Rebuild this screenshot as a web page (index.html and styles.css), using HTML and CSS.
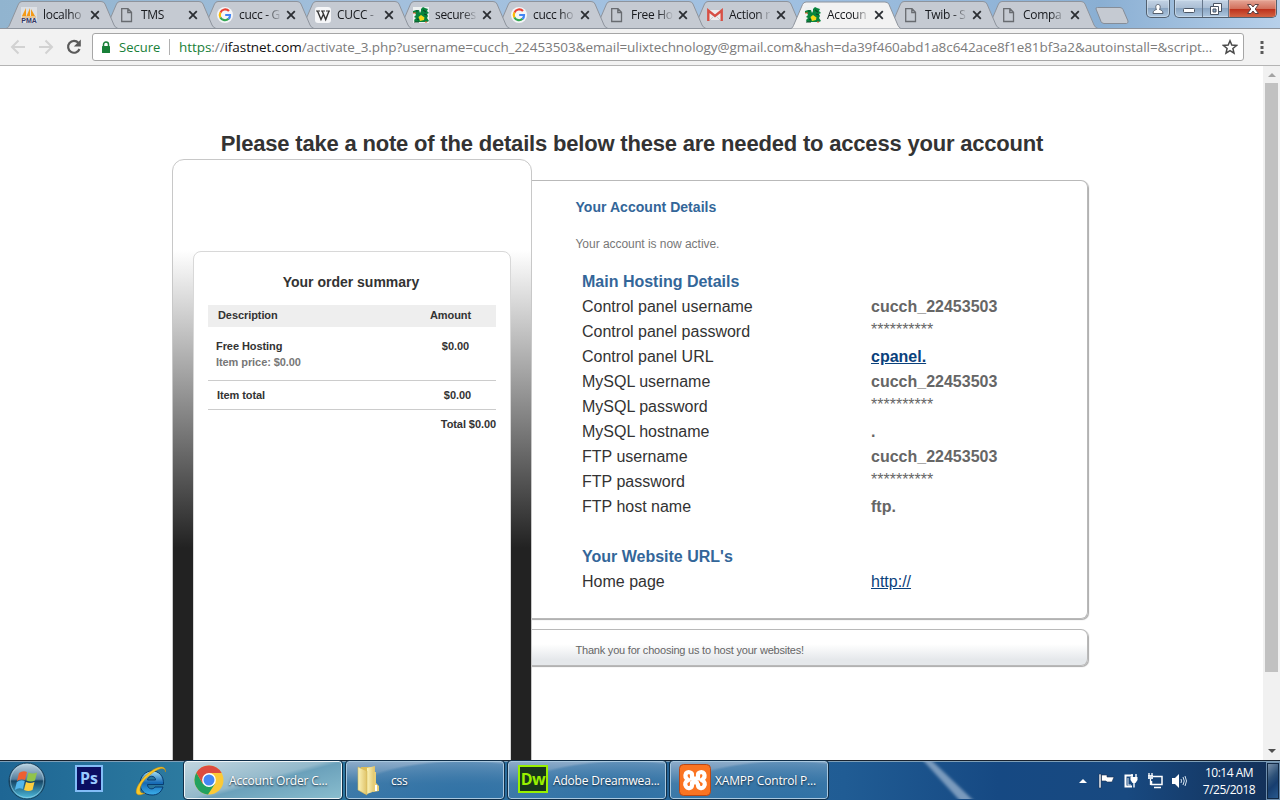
FILE: index.html
```html
<!DOCTYPE html>
<html lang="en">
<head>
<meta charset="utf-8">
<title>Account Order Confirmation</title>
<link rel="stylesheet" href="styles.css">
</head>
<body>
<svg class="defs" width="0" height="0" aria-hidden="true">
  <defs>
    <linearGradient id="orb" x1="0" y1="0" x2="0" y2="1"><stop offset="0" stop-color="#c0d5e2"/><stop offset=".45" stop-color="#557f9e"/><stop offset=".5" stop-color="#164464"/><stop offset="1" stop-color="#4fc0e2"/></linearGradient>
    <linearGradient id="ie" x1="0" y1="0" x2="0" y2="1"><stop offset="0" stop-color="#a5e2f8"/><stop offset=".5" stop-color="#1669b4"/><stop offset="1" stop-color="#3cb0ec"/></linearGradient>
    <linearGradient id="fold" x1="0" y1="0" x2="1" y2="0"><stop offset="0" stop-color="#fbf3b8"/><stop offset="1" stop-color="#dfc267"/></linearGradient>
    <filter id="soft" x="-20%" y="-20%" width="140%" height="140%"><feGaussianBlur stdDeviation="1.500"/></filter>
    <symbol id="tab" viewBox="0 0 112 28"><path d="M0 28.5 C2 28 2.500 27 3.500 25 L12.500 4 Q13.700 1.500 16 1.500 H95 Q98 1.500 99 4 L108 25 Q109.500 28 112 28.500Z" fill="currentColor" stroke="#8e949d"/></symbol>
    <symbol id="x" viewBox="0 0 10 10"><path d="M1.200 1.200l7.600 7.600M8.800 1.200l-7.600 7.600" stroke="#2b2e33" stroke-width="1.800"/></symbol>
    <symbol id="doc" viewBox="0 0 16 16"><path d="M2.700 1.700H9L12.500 5.300V14.500H2.700ZM8.800 1.700V5.500H12.500" fill="none" stroke="#686b70" stroke-width="1.300"/></symbol>
    <symbol id="google" viewBox="0 0 16 16"><circle cx="8" cy="8" r="8" fill="#f5f6f8"/><path d="M12 4.100A5.200 5.200 0 0 0 3.400 5.600" fill="none" stroke="#ea4335" stroke-width="2.200"/><path d="M3.400 5.600a5.200 5.200 0 0 0 0 4.900" fill="none" stroke="#fbbc05" stroke-width="2.200"/><path d="M3.400 10.500a5.200 5.200 0 0 0 8.200 1.300" fill="none" stroke="#34a853" stroke-width="2.200"/><path d="M8.200 8H13a5 5 0 0 1-1.500 3.900" fill="none" stroke="#4285f4" stroke-width="2.200"/></symbol>
    <symbol id="wiki" viewBox="0 0 16 16"><rect width="16" height="16" rx="3" fill="#f5f6f8"/><path d="M1 4h4M6 4h4M11 4h4" stroke="#333" stroke-width="1"/><path d="M2.500 4l3.500 8.500 2.300-5M7.200 4l3.500 8.500L14 4" fill="none" stroke="#333" stroke-width="1.400"/></symbol>
    <symbol id="dragon" viewBox="0 0 16 16"><rect width="16" height="16" fill="#eef1f1"/><path d="M0 4L3 3l3 0 1 3 1-2 0-2 2-2 2 1 3 1-1 2 2 2-2 1 1 2-1 2 2 3-2 1H2l-1-2 2-2-2-1 2-2-1-2-2 0Z" fill="#08843d"/><path d="M5.500 10l2.500-2 3.500 2.500L11 13 7 14Z" fill="#f4d817"/><path d="M3 4h2M10 3l3 2M4 12l2 1M11 7l3 1M1 15h5" stroke="#0a4926" stroke-width="1.200"/><path d="M0 6h3M12 15h2" stroke="#e45d27"/></symbol>
    <symbol id="gmail" viewBox="0 0 16 16"><path d="M1 3h14v10H1Z" fill="#eee"/><path d="M1.300 14V3.500L8 9l6.700-5.500V14" fill="none" stroke="#d75045" stroke-width="2.400"/><path d="M3 13l4-4M13 13L9 9" stroke="#ccc"/></symbol>
  </defs>
</svg>

<header class="chrome">
  <div class="tabstrip">
    <div class="tabs">
      <div class="tab"><svg class="shape"><use href="#tab"/></svg><svg class="fav" viewBox="0 0 16 16"><rect width="16" height="16" fill="#dde0e5"/><path d="M1 9L5 1v8ZM5.500 9L9 1v8ZM10 9V2l4 7Z" fill="#f49a16"/><path d="M1 10h14" stroke="#f3ac46"/><text class="pma" x="0.3" y="15.800">PMA</text></svg><span class="name">localho</span><svg class="close"><use href="#x"/></svg></div>
      <div class="tab"><svg class="shape"><use href="#tab"/></svg><svg class="fav"><use href="#doc"/></svg><span class="name">TMS</span><svg class="close"><use href="#x"/></svg></div>
      <div class="tab"><svg class="shape"><use href="#tab"/></svg><svg class="fav"><use href="#google"/></svg><span class="name">cucc - G</span><svg class="close"><use href="#x"/></svg></div>
      <div class="tab"><svg class="shape"><use href="#tab"/></svg><svg class="fav"><use href="#wiki"/></svg><span class="name">CUCC -</span><svg class="close"><use href="#x"/></svg></div>
      <div class="tab"><svg class="shape"><use href="#tab"/></svg><svg class="fav"><use href="#dragon"/></svg><span class="name">secures</span><svg class="close"><use href="#x"/></svg></div>
      <div class="tab"><svg class="shape"><use href="#tab"/></svg><svg class="fav"><use href="#google"/></svg><span class="name">cucc ho</span><svg class="close"><use href="#x"/></svg></div>
      <div class="tab"><svg class="shape"><use href="#tab"/></svg><svg class="fav"><use href="#doc"/></svg><span class="name">Free Ho</span><svg class="close"><use href="#x"/></svg></div>
      <div class="tab"><svg class="shape"><use href="#tab"/></svg><svg class="fav"><use href="#gmail"/></svg><span class="name">Action r</span><svg class="close"><use href="#x"/></svg></div>
      <div class="tab active"><svg class="shape"><use href="#tab"/></svg><svg class="fav"><use href="#dragon"/></svg><span class="name">Accoun</span><svg class="close"><use href="#x"/></svg></div>
      <div class="tab"><svg class="shape"><use href="#tab"/></svg><svg class="fav"><use href="#doc"/></svg><span class="name">Twib - S</span><svg class="close"><use href="#x"/></svg></div>
      <div class="tab"><svg class="shape"><use href="#tab"/></svg><svg class="fav"><use href="#doc"/></svg><span class="name">Compa</span><svg class="close"><use href="#x"/></svg></div>
    </div>
    <svg class="newtab" width="34" height="17" viewBox="0 0 34 17"><path d="M1 2Q.5.500 2.500.500H25Q27 .5 28 2.500L33 14Q33.500 16 31.500 16.500H9Q7 16.500 6 14.500Z" fill="#c5cad2" stroke="#858d98"/></svg>
    <div class="winbtns">
      <div class="wb user"><svg width="12" height="12" viewBox="0 0 12 12"><path d="M1 10.500C1 7.500 3 7 4.500 6.500 3 3.500 4 1.500 6 1.500s3 2 1.500 5c1.500.5 3.500 1 3.500 4Z" fill="#fff" stroke="#56606e"/></svg></div>
      <div class="wbgroup">
        <div class="wb min"><svg width="14" height="12" viewBox="0 0 14 12"><rect x="1.500" y="5.500" width="11" height="4" rx="1" fill="#fff" stroke="#4b5564"/></svg></div>
        <div class="wb max"><svg width="14" height="14" viewBox="0 0 14 14"><path d="M4.500 1.500h8v8h-8z" fill="#fff" stroke="#4b5564"/><path d="M1.500 4.500h8v8h-8z" fill="#fff" stroke="#4b5564"/><path d="M4 7h3v3H4z" fill="#8caac9" stroke="#4b5564"/></svg></div>
        <div class="wb exit"><svg width="14" height="12" viewBox="0 0 14 12"><path d="M1.500 1.500h3.500l2 2.500 2-2.500h3.500L9.200 6l3.300 4.500H9L7 8l-2 2.500H1.500L4.800 6Z" fill="#fff" stroke="#5a4043"/></svg></div>
      </div>
    </div>
  </div>
  <div class="toolbar">
    <svg class="nav" width="82" height="24" viewBox="0 0 82 24"><path d="M15 12H2M8.500 5.500L2 12l6.500 6.500M29 12h13M35.500 5.500L42 12l-6.500 6.500" fill="none" stroke="#d2d2d2" stroke-width="2"/><path d="M68.500 8A5.900 5.900 0 1 0 69.500 14" fill="none" stroke="#5a5a5a" stroke-width="2.200"/><path d="M70.800 4.500v7h-7Z" fill="#5a5a5a"/></svg>
    <div class="omnibox">
      <svg class="lock" width="10" height="13" viewBox="0 0 10 13"><path d="M2.500 6V3.500a2.500 2.500 0 0 1 5 0V6" fill="none" stroke="#188038" stroke-width="1.500"/><rect x="1" y="5" width="8" height="7" rx=".6" fill="#188038"/></svg>
      <span class="secure">Secure</span><i class="sep"></i>
      <span class="url"><b class="https">https</b>://<b class="host">ifastnet.com</b>/activate_3.php?username=cucch_22453503&amp;email=ulixtechnology@gmail.com&amp;hash=da39f460abd1a8c642ace8f1e81bf3a2&amp;autoinstall=&amp;script...</span>
      <svg class="star" width="16" height="16" viewBox="0 0 16 16"><path d="M8 1.800l1.800 4.300 4.700.4-3.600 3 1.100 4.600L8 11.700l-4 2.400 1.100-4.600-3.600-3 4.700-.4Z" fill="none" stroke="#4a4a4a" stroke-width="1.500"/></svg>
    </div>
    <svg class="dots" width="4" height="14" viewBox="0 0 4 14"><path d="M.5 1h3v3h-3zM.5 6h3v3h-3zM.5 11h3v3h-3z" fill="#5a5a5a"/></svg>
  </div>
</header>

<div class="viewport">
  <main class="page">
    <h1>Please take a note of the details below these are needed to access your account</h1>
    <div class="columns">
      <aside class="tower">
        <section class="summary">
          <h2>Your order summary</h2>
          <div class="line head"><span>Description</span><span>Amount</span></div>
          <div class="line item"><span>Free Hosting<br><em>Item price: $0.00</em></span><span>$0.00</span></div>
          <div class="line total"><span>Item total</span><span>$0.00</span></div>
          <p class="grand">Total $0.00</p>
        </section>
      </aside>
      <div class="right">
        <section class="box details">
          <h3>Your Account Details</h3>
          <p class="status">Your account is now active.</p>
          <dl class="grid">
            <dt class="group">Main Hosting Details</dt><dd></dd>
            <dt>Control panel username</dt><dd>cucch_22453503</dd>
            <dt>Control panel password</dt><dd class="mask">**********</dd>
            <dt>Control panel URL</dt><dd><a>cpanel.</a></dd>
            <dt>MySQL username</dt><dd>cucch_22453503</dd>
            <dt>MySQL password</dt><dd class="mask">**********</dd>
            <dt>MySQL hostname</dt><dd>.</dd>
            <dt>FTP username</dt><dd>cucch_22453503</dd>
            <dt>FTP password</dt><dd class="mask">**********</dd>
            <dt>FTP host name</dt><dd>ftp.</dd>
            <dt></dt><dd></dd>
            <dt class="group">Your Website URL's</dt><dd></dd>
            <dt>Home page</dt><dd class="plain"><a>http://</a></dd>
          </dl>
        </section>
        <section class="box thanks">Thank you for choosing us to host your websites!</section>
      </div>
    </div>
  </main>
  <div class="scroll"><i class="up"></i><i class="thumb"></i><i class="down"></i></div>
</div>

<footer class="taskbar">
  <div class="launch">
    <svg class="orb" width="38" height="38" viewBox="0 0 38 38"><circle cx="19" cy="19" r="18" fill="url(#orb)" stroke="#163d58"/><circle cx="19" cy="19" r="16.500" fill="none" stroke="#b5dced" stroke-opacity=".5"/><path d="M11 11q4-3 8-1l-2 8q-4-2-8 1Z" fill="#ee6031"/><path d="M20.500 10.500q4 2 8.500 0l-2 8q-4 2-8.500 0Z" fill="#91c44b"/><path d="M8.800 20q4-3 8-1l-2 8q-4-2-8 1Z" fill="#53b6ec"/><path d="M18 20q4 2 8.500 0l-2 8q-4 2-8.500 0Z" fill="#fccd3e"/></svg>
    <span class="ps">Ps</span>
    <svg class="ie" width="34" height="34" viewBox="0 0 34 34"><path d="M29.500 20.500H13.500c0 5 6 5.500 7.500 2.500h8C27 29 23 31 18 31 10 31 6 26 6 19.500S11 7 18 7s12 5 11.500 13.500ZM13.500 16h8c0-5-7.500-5-8 0Z" fill="url(#ie)" fill-rule="evenodd" stroke="#083d71"/><path d="M31.500 8C32 1 24 2 16 8 6 15 0 27 3 30c2 2 6 0 8-1-9 2-5-11 5-18C24 4 31 2 31.500 8Z" fill="#f9c828" stroke="#c88a0a" stroke-width=".5"/></svg>
  </div>
  <div class="apps">
    <div class="app on"><svg width="32" height="32" viewBox="0 0 32 32"><circle cx="16" cy="16" r="14.500" fill="#fbc936"/><path d="M3.400 8.800A14.500 14.500 0 0 0 15 30.500L22.200 19.600 16 16 9.700 19.600Z" fill="#22a15f"/><path d="M3.400 8.800L9.700 19.600 16 9H28.600A14.500 14.500 0 0 0 3.400 8.800" fill="#dd4b3e"/><circle cx="16" cy="16" r="6.900" fill="#fff"/><circle cx="16" cy="16" r="5.500" fill="#4587f3"/></svg><span>Account Order C...</span></div>
    <div class="app folder"><svg width="32" height="32" viewBox="0 0 32 32"><path d="M6 3h11v25l-8 2Z" fill="#dcbd58"/><path d="M12 4l8-2v25l-8 3Z" fill="url(#fold)"/><path d="M3 3l9 4v24l-9-5Z" fill="url(#fold)" stroke="#d5b856" stroke-width=".6"/><path d="M19 8h2v11l3 3v5l-6 1Z" fill="#e8ce77"/><path d="M21 21v6" stroke="#fff" stroke-width="2"/></svg><span>css</span></div>
    <div class="app"><b class="dw">Dw</b><span>Adobe Dreamwea...</span></div>
    <div class="app"><svg class="xampp" width="32" height="32" viewBox="0 0 32 32"><rect x=".5" y=".5" width="31" height="31" rx="4" fill="#fa7422" stroke="#ba4715"/><path d="M7 9.500C8 7.500 13.500 7.500 13 11.500V14.500H19V11.500C18.500 7.500 24 7.500 25 9.500 26.500 12.500 25 14.500 22.500 16 26 17.500 26.500 20 25 22.500 23.500 25 18.500 24.500 19 20.500M7 9.500C5.500 12.500 7 14.500 9.500 16 6 17.500 5.500 20 7 22.500 8.500 25 13.500 24.500 13 20.500V18.500H18" fill="none" stroke="#fff" stroke-width="4.200" stroke-linejoin="round" stroke-linecap="round"/></svg><span>XAMPP Control P...</span></div>
  </div>
  <svg class="glow" width="70" height="38" viewBox="0 0 70 38"><path d="M10 -4h8l48 46H52Z" fill="#9bb4cf" fill-opacity=".75" filter="url(#soft)"/></svg>
  <div class="tray">
    <svg width="110" height="18" viewBox="0 0 110 18"><path d="M0 11l4-4 4 4Z" fill="#fff"/><g stroke="#172d4e" stroke-width=".6" fill="#fff"><path d="M20 2h2v14h-2zM22.500 3H28v2h7l-2 5h-5l-1-1h-4.500Z"/></g><path d="M54 3.500h-7.500v11H53" fill="none" stroke="#fff" stroke-width="2"/><path d="M49 6v7h3" fill="none" stroke="#dce5ef"/><path d="M51.500 5h7v3l-2 3h-3l-2-3Z" fill="#fff"/><path d="M53 2v3M57 2v3M55 10v5.500" stroke="#fff" stroke-width="1.400"/><path d="M73 4.500h10v8H72.500V9M75 15.500h7" fill="none" stroke="#fff" stroke-width="1.500"/><path d="M69 3h5v4h-5Z" fill="#dce5ef"/><path d="M70 1v3M73 1v3M71.500 7v6" stroke="#fff" stroke-width="1.300"/><path d="M93 6h3l4-4v14l-4-4h-3Z" fill="#fff"/><path d="M102 7q1 2 0 4M104 5q2.500 4 0 8M106 4q3 5 0 10" fill="none" stroke="#d6e3ef"/></svg>
    <div class="clock">10:14 AM<br>7/25/2018</div>
    <i class="peek"></i>
  </div>
</footer>
</body>
</html>
```

FILE: styles.css
```css
* { box-sizing: border-box; }
body { margin: 0; width: 1280px; height: 800px; overflow: hidden; display: flex; flex-direction: column; background: #fff; font-family: "Liberation Sans", Arial, sans-serif; }
svg { display: block; flex: none; }
.defs { position: absolute; }
h1, h2, h3, p, dl, dd { margin: 0; }

/* browser chrome */
.chrome { flex: none; height: 66px; font-family: "Open Sans", sans-serif; }
.tabstrip { height: 29px; display: flex; padding-left: 6px; background: linear-gradient(90deg, #91b4cf, #a3c0dd 30%, #a1c1e2 60%, #8aafd3 86%, #b7d0ea); border-bottom: 1px solid #8e949d; }
.tabs { display: flex; height: 29px; position: relative; }
.tab { position: relative; width: 98px; height: 29px; display: flex; align-items: center; padding: 0 4px 0 15px; color: #c5cad2; }
.shape { position: absolute; left: 0; top: 0; width: 112px; height: 28px; overflow: visible; }
.tab:nth-child(1) { z-index: 8; }
.tab:nth-child(2) { z-index: 7; }
.tab:nth-child(3) { z-index: 6; }
.tab:nth-child(4) { z-index: 5; }
.tab:nth-child(5) { z-index: 4; }
.tab:nth-child(6) { z-index: 3; }
.tab:nth-child(7) { z-index: 2; }
.tab:nth-child(8) { z-index: 1; }
.tab:nth-child(10) { z-index: 1; }
.tab.active { z-index: 20; color: #f2f2f2; height: 30px; padding-bottom: 1px; }
.tab.active .shape { height: 29px; }
.fav { position: relative; width: 16px; height: 16px; }
.name { position: relative; width: 42px; margin-left: 6px; font-size: 12px; line-height: 18px; letter-spacing: -.3px; white-space: nowrap; color: #17191d; -webkit-mask-image: linear-gradient(90deg, #000 65%, transparent 102%); mask-image: linear-gradient(90deg, #000 65%, transparent 102%); }
.close { position: relative; width: 10px; height: 10px; margin-left: 5px; }
.pma { font: bold 7px "Liberation Sans", sans-serif; fill: #343764; }
.newtab { margin: 7px 0 0 11px; }
.winbtns { display: flex; margin-left: auto; padding-right: 3px; gap: 4px; height: 18px; }
.wb { display: flex; align-items: center; justify-content: center; height: 18px; }
.user, .wbgroup { border: 1px solid #52606f; border-top: 0; border-radius: 0 0 5px 5px; box-shadow: inset 0 0 0 1px #d4e2f0aa; background: linear-gradient(#c3d3e5, #a9bdd3 48%, #8ba6c3 50%, #adc6df); }
.user { width: 24px; }
.wbgroup { display: flex; width: 103px; overflow: hidden; }
.min { width: 28px; border-right: 1px solid #66778b; }
.max { width: 26px; border-right: 1px solid #66778b; }
.exit { flex: 1; background: linear-gradient(#e5a596, #d2705c 48%, #bc301b 50%, #d56a48); box-shadow: inset 0 0 0 1px #f0b9a988; }
.toolbar { height: 37px; display: flex; align-items: center; background: #f2f2f2; border-bottom: 1px solid #b4b4b4; padding: 0 16px 0 10px; }
.omnibox { display: flex; align-items: center; width: 1152px; height: 28px; border: 1px solid #a6a6a6; border-radius: 3px; background: #fff; padding: 0 5px 0 8px; font-size: 14px; }
.secure { margin-left: 8px; width: 43px; flex: none; color: #188038; font-size: 13px; white-space: nowrap; }
.sep { width: 1px; flex: none; height: 16px; background: #b0b0b0; margin: 0 9px 0 7px; }
.url { flex: 1; white-space: nowrap; font-size: 13.5px; letter-spacing: -.068px; color: #7b7b7b; }
.url b { font-weight: 400; }
.url .https { color: #188038; }
.url .host { color: #111; }
.dots { margin-left: auto; }

/* page */
.viewport { height: 694px; display: flex; overflow: hidden; flex: none; }
.page { width: 1263px; padding: 64px 0 0 172px; }
h1 { width: 920px; height: 29px; font-size: 22px; line-height: 27px; letter-spacing: -.19px; text-align: center; color: #333; white-space: nowrap; }
.columns { display: flex; align-items: flex-start; }
.tower { position: relative; z-index: 1; width: 360px; height: 720px; border: 1px solid #c8c8c8; border-radius: 12px 12px 0 0; background: linear-gradient(#fff 90px, #222 388px); padding: 91px 20px 0; }
.summary { height: 640px; border: 1px solid #d8d8d8; border-radius: 8px 8px 0 0; background: #fff; padding: 20px 14px 0; font-weight: bold; font-size: 11px; letter-spacing: -.08px; color: #333; }
h2 { font-size: 14px; line-height: 20px; letter-spacing: 0; text-align: center; margin-bottom: 13px; padding-right: 2px; }
.line { display: flex; justify-content: space-between; }
.head { height: 22px; line-height: 21px; padding: 0 25px 0 10px; background: #eee; }
.item { height: 54px; line-height: 16px; padding: 11px 27px 0 8px; border-bottom: 1px solid #ccc; }
.item em { font-style: normal; color: #777; }
.total { height: 29px; line-height: 29px; padding: 0 25px 0 9px; border-bottom: 1px solid #ccc; }
.grand { line-height: 29px; text-align: right; }
.right { width: 557px; margin-left: -1px; padding-top: 21px; display: flex; flex-direction: column; gap: 10px; }
.box { border: 1px solid #b9b9b9; border-left: 0; border-radius: 0 7px 7px 0; box-shadow: 1px 1px 1px #aaa; }
.details { height: 439px; padding: 16px 0 0 44px; }
h3 { font-size: 14px; line-height: 20px; letter-spacing: .04px; padding-left: .5px; color: #369; }
.status { font-size: 12px; line-height: 20px; letter-spacing: -.04px; padding-left: .5px; margin-top: 17px; color: #777; }
.grid { display: grid; grid-template-columns: 289px 1fr; grid-auto-rows: 25px; line-height: 25px; font-size: 16px; padding: 15px 0 0 7px; color: #333; }
.group { font-weight: bold; color: #369; }
dd { font-weight: bold; color: #666; }
dd a { color: #0a417c; text-decoration: underline; }
.grid .plain { font-weight: 400; }
.grid .mask { font-weight: 400; line-height: 22px; }
.thanks { height: 37px; padding-left: 44.5px; font-size: 11px; letter-spacing: -.21px; line-height: 41px; color: #666; background: linear-gradient(#fff 40%, #e5e8eb 85%); }
.scroll { width: 17px; background: #f1f1f1; display: flex; flex-direction: column; align-items: center; }
.up, .down { border: 4px solid transparent; width: 0; height: 0; }
.up { border-bottom-color: #a3a3a3; border-top: 0; margin: 7px 0 6px; }
.thumb { width: 13px; height: 589px; background: #c1c1c1; }
.down { border-top-color: #505050; border-bottom: 0; margin-top: auto; margin-bottom: 7px; }

/* taskbar */
.taskbar { height: 40px; flex: none; display: flex; color: #fff; font-family: "Open Sans", sans-serif; font-size: 12px; border-top: 1px solid #18222e; box-shadow: inset 0 1px #7f9fb7; background: linear-gradient(90deg, #1e6694, #2d7ba0 15%, #2a6c9c 40%, #205c94 66%, #164983 78%, #184980 88%, #132f56); }
.launch { width: 184px; display: flex; align-items: center; padding-left: 8px; }
.ps { width: 28px; height: 27px; margin: 0 31px 4px 29px; border: 2px solid #83bdf7; background: #0b0f62; color: #9acbff; font-weight: 700; font-size: 16px; line-height: 22px; text-align: center; }
.apps { display: flex; gap: 4px; }
.app { width: 158px; height: 38px; border: 1px solid #a9c8df; outline: 1px solid #102e48; border-radius: 3px; display: flex; align-items: center; padding-left: 8px; background: radial-gradient(ellipse at 75% 110%, #2f71a5 0, #3a78a988 70%, transparent 74%), linear-gradient(#8cabc9, #427ca9 60%, #3c79a7); text-shadow: 0 1px 2px #123; white-space: nowrap; }
.app span { margin-left: 4px; letter-spacing: -.18px; }
.app.on { border-color: #eef5f8; background: linear-gradient(165deg, #c1d5df, #93b9cb 48%, #6ba1bb 54%, #89bdce); }
.dw { width: 30px; height: 28px; border: 2px solid #98f000; background: #18351b; color: #98f000; font-size: 16px; line-height: 24px; text-align: center; letter-spacing: -.5px; margin: 0 1px 3px 1px; text-shadow: none; }
.glow { margin-left: 82px; }
.tray { margin-left: auto; display: flex; align-items: center; }
.clock { width: 70px; margin-left: 5px; font-size: 12px; line-height: 17px; text-align: center; letter-spacing: -.5px; }
.peek { width: 14px; height: 38px; margin-left: 2px; border: 1px solid #6f8fad; box-shadow: inset 0 0 0 1px #122944; background: linear-gradient(135deg, #8096ad, #2d5178 40%, #173e6f 60%, #2a5d92); }
```
